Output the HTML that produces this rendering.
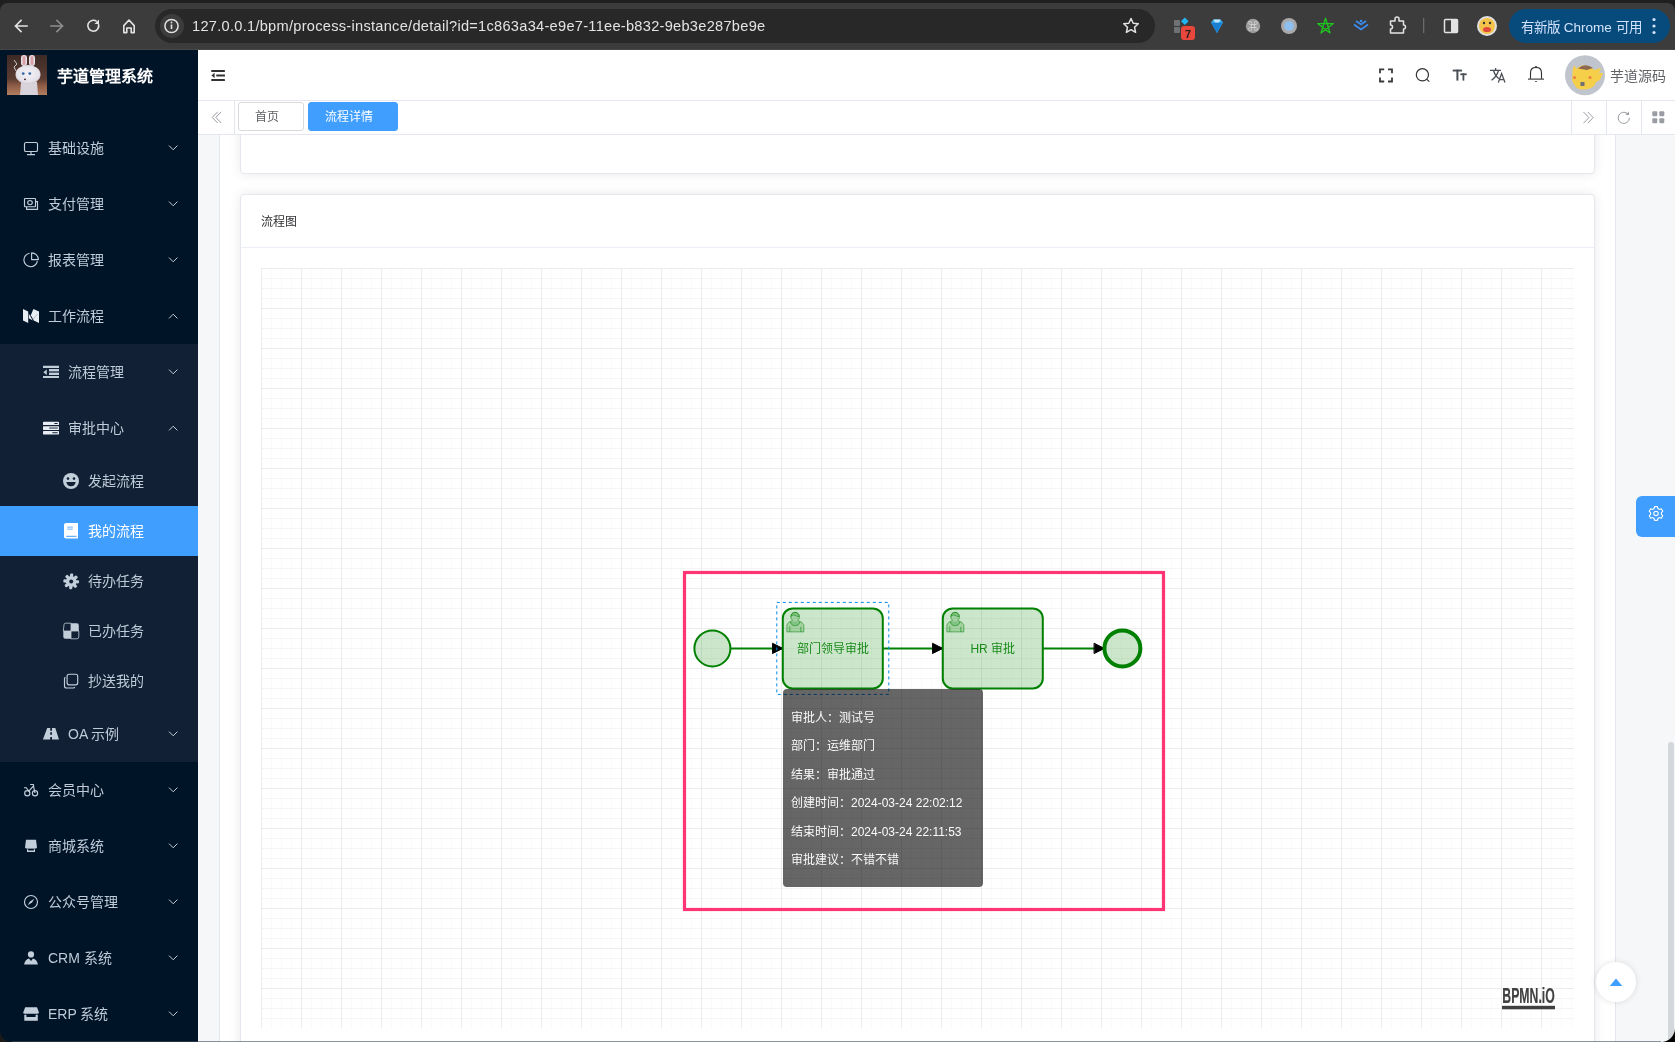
<!DOCTYPE html>
<html lang="zh-CN"><head><meta charset="utf-8">
<style>
*{box-sizing:border-box;margin:0;padding:0}
body{will-change:transform}
html,body{width:1675px;height:1042px;overflow:hidden;background:#f5f7f9;font-family:"Liberation Sans",sans-serif}
svg{position:absolute;overflow:visible}
/* chrome */
#chrome{position:absolute;left:0;top:0;width:1675px;height:50px;background:#1f1f1f}
#chrome .bar{position:absolute;left:0;top:3px;width:1675px;height:47px;background:#3c3c3c;border-radius:8px 8px 0 0}
#chrome .line{position:absolute;left:0;top:49px;width:1675px;height:1px;background:#474747}
#url{position:absolute;left:155px;top:9px;width:1000px;height:34px;border-radius:17px;background:#282828}
#url .info{position:absolute;left:5px;top:5px;width:24px;height:24px;border-radius:12px;background:#3c3c3c}
#url .txt{position:absolute;left:37px;top:8.6px;font-size:14.6px;color:#e3e3e3;white-space:nowrap;letter-spacing:.28px}
#newchrome{position:absolute;left:1509px;top:9px;width:161px;height:34px;border-radius:17px;background:#064b7b;color:#d3e3fd;font-size:13.5px}
#newchrome span{position:absolute;left:12px;top:6.8px;white-space:nowrap;font-weight:500}
/* sidebar */
#side{position:absolute;left:0;top:50px;width:198px;height:992px;background:#001428;overflow:hidden}
#side .logo{position:absolute;left:7px;top:5px;width:40px;height:40px;background:radial-gradient(ellipse 11px 13px at 22px 24px,#f2eef0 60%,transparent 100%),radial-gradient(ellipse 8px 5px at 22px 37px,#d9c8c2 50%,transparent 100%),linear-gradient(#4a2e25,#7a5040 60%,#b07a5c)}
#side .title{position:absolute;left:57px;top:16px;font-size:16px;font-weight:bold;color:#fff;white-space:nowrap;line-height:22px}
.mi{position:absolute;left:0;width:198px;color:#bfcbd9;font-size:14px;white-space:nowrap}
.mi .t{position:absolute;top:50%;margin-top:-10px;line-height:20px}
.mi svg{top:50%}
.ch{position:absolute;left:169px;top:50%;width:9px;height:6px;margin-top:-3px}
.sub{position:absolute;left:0;top:294px;width:198px;height:418px;background:#112034}
/* header */
#hdr{position:absolute;left:198px;top:50px;width:1477px;height:51px;background:#fff;border-bottom:1px solid #e4e7ed}
#tags{position:absolute;left:198px;top:101px;width:1477px;height:34px;background:#fff;border-bottom:1px solid #e4e7ed}
.tag{position:absolute;top:1px;height:29px;border:1px solid #d9d9d9;border-radius:3px;font-size:12px;color:#606266;line-height:29px;white-space:nowrap}
.tb{position:absolute;top:0;height:34px;border-left:1px solid #e4e7ed;width:35px}
/* main */
#wrap{position:absolute;left:219px;top:135px;width:1397px;height:907px;background:#fff;overflow:hidden;box-shadow:inset 1px 0 0 #e4e7ed,inset -1px 0 0 #e4e7ed}
.card{position:absolute;background:#fff;border:1px solid #e4e7ed;border-radius:4px;box-shadow:0 0 12px 0 rgba(0,0,0,.09)}
.chd{position:absolute;left:0;top:0;width:100%;height:53px;border-bottom:1px solid #ebeef5;font-size:12px;color:#303133;padding:19.3px 0 0 20px;line-height:17px}
#grid{position:absolute;left:20px;top:73px;width:1313px;height:760px;background-color:#fff;
background-image:linear-gradient(#ececec 1px,transparent 1px),linear-gradient(90deg,#ececec 1px,transparent 1px),linear-gradient(#f5f5f5 1px,transparent 1px),linear-gradient(90deg,#fafafa 1px,transparent 1px);
background-size:40px 40px,40px 40px,10px 10px,10px 10px}
#tip{position:absolute;left:783px;top:689px;width:200px;height:198px;background:rgba(0,0,0,.6);border-radius:4px;color:#fafafa;font-size:12px;padding:20.6px 0 0 8px}
#tip div{height:28.55px;line-height:16.33px;white-space:nowrap}
</style></head><body>
<div id="chrome">
  <div class="bar"></div>
  <div class="line"></div>
  <svg width="1675" height="50" style="left:0;top:0">
    <g stroke="#e3e3e3" stroke-width="1.6" fill="none" stroke-linecap="square">
      <path d="M15.5 26H27M21 20.5L15.5 26L21 31.5"/>
      <path d="M51 26H62.5M57 20.5L62.5 26L57 31.5" stroke="#8e8e8e"/>
      <path d="M98.5 24A5.5 5.5 0 1 1 96.8 21.5" stroke-linecap="butt"/>
      <path d="M123.8 25.6L129 20L134.2 25.6V32.6H131.2V28H126.8V32.6H123.8Z" stroke-linejoin="round"/>
    </g>
    <path d="M99 19.5V24H94.5Z" fill="#e3e3e3"/>
  </svg>
  <div id="url"><div class="info"></div><div class="txt">127.0.0.1/bpm/process-instance/detail?id=1c863a34-e9e7-11ee-b832-9eb3e287be9e</div></div>
  <svg width="1675" height="50" style="left:0;top:0">
    <circle cx="171.5" cy="26" r="6.6" stroke="#e3e3e3" stroke-width="1.5" fill="none"/>
    <rect x="170.7" y="24.5" width="1.6" height="4.5" fill="#e3e3e3"/><circle cx="171.5" cy="22.5" r="0.9" fill="#e3e3e3"/>
    <path d="M1131 18.5L1133.2 23.3L1138.3 23.8L1134.5 27.2L1135.6 32.3L1131 29.7L1126.4 32.3L1127.5 27.2L1123.7 23.8L1128.8 23.3Z" stroke="#e3e3e3" stroke-width="1.5" fill="none" stroke-linejoin="round"/>
    <rect x="1174" y="20" width="6" height="6" rx="1" fill="#6f7275"/><rect x="1174" y="27" width="6" height="6" rx="1" fill="#6f7275"/>
    <path d="M1184.8 17.6L1188.6 21.3L1184.8 25L1181 21.3Z" fill="#22b5f5"/>
    <rect x="1181" y="26" width="14" height="14" rx="3" fill="#e9473b"/>
    <text x="1188" y="37.5" font-size="11" font-weight="bold" text-anchor="middle" fill="#202020" font-family="Liberation Sans">7</text>
    <path d="M1211 22.5L1213.5 19.5H1220.5L1223 22.5L1217 33Z" fill="#3db4f2"/><path d="M1211 22.5H1223L1217 33Z" fill="#1a7fd0"/><path d="M1213.5 19.5H1220.5L1219 22.5H1215Z" fill="#bfe8ff"/>
    <circle cx="1253" cy="26" r="7.2" fill="#9d9d9d"/><text x="1253" y="30" font-size="10" text-anchor="middle" fill="#eee" font-family="Liberation Sans">⌘</text>
    <circle cx="1289" cy="26" r="8" fill="#a9a9a9"/><circle cx="1289" cy="26" r="4.8" fill="#8fbff0"/>
    <path d="M1325.5 18.2L1330 33L1317.6 23.6H1333.4L1321 33Z" stroke="#1fc41f" stroke-width="1.3" fill="none" stroke-linejoin="round"/>
    <g stroke="#3b8cf0" stroke-width="1.8" fill="none"><path d="M1354 24.5L1361 29.5L1368 24.5"/><path d="M1356 21L1361 24.5L1366 21"/></g><circle cx="1361" cy="21" r="1.3" fill="#3b8cf0"/>
    <path d="M1390.5 21H1395V19A2 2 0 0 1 1399 19V21H1403.5V25A2 2 0 0 1 1403.5 29V33H1390.5V29A2 2 0 0 0 1390.5 25Z" stroke="#e3e3e3" stroke-width="1.5" fill="none" stroke-linejoin="round"/>
    <rect x="1423" y="18" width="1.3" height="15" fill="#6b6b6b"/>
    <rect x="1444.5" y="19.5" width="13" height="13" stroke="#e3e3e3" stroke-width="1.5" fill="none" rx="1"/><rect x="1451" y="19.5" width="6.5" height="13" fill="#e3e3e3"/>
    <circle cx="1487" cy="26" r="10" fill="#e0e0e0"/><circle cx="1487" cy="26" r="8" fill="#f3c34a"/><ellipse cx="1487" cy="29.5" rx="4" ry="2.6" fill="#e04a3c"/><circle cx="1484" cy="23" r="1.2" fill="#333"/><circle cx="1490" cy="23" r="1.2" fill="#333"/>
  </svg>
  <div id="newchrome"><span>有新版 Chrome 可用</span>
    <svg width="10" height="20" style="left:141px;top:7px"><circle cx="4" cy="3.5" r="1.6" fill="#d3e3fd"/><circle cx="4" cy="10" r="1.6" fill="#d3e3fd"/><circle cx="4" cy="16.5" r="1.6" fill="#d3e3fd"/></svg>
  </div>
</div>

<div id="side">
  <svg width="40" height="40" style="left:7px;top:5px">
  <defs><linearGradient id="lg" x1="0" y1="0" x2="0" y2="1"><stop offset="0" stop-color="#3d2a26"/><stop offset=".6" stop-color="#5a3c32"/><stop offset=".75" stop-color="#8a5a44"/><stop offset="1" stop-color="#b37e60"/></linearGradient>
  <radialGradient id="rg" cx=".5" cy=".45" r=".55"><stop offset="0" stop-color="#f4f2f6"/><stop offset=".8" stop-color="#e6e2ea"/><stop offset="1" stop-color="#cfc8d0"/></radialGradient></defs>
  <rect width="40" height="40" fill="url(#lg)"/>
  <rect x="14" y="0" width="6" height="11" rx="3" fill="#e8e4ea"/><rect x="15.5" y="1" width="3" height="9" rx="1.5" fill="#d9a0ac"/>
  <rect x="22" y="0" width="6" height="11" rx="3" fill="#e8e4ea"/><rect x="23.5" y="1" width="3" height="9" rx="1.5" fill="#d9a0ac"/>
  <path d="M14 27H30L31 40H13Z" fill="#d8d2da"/>
  <ellipse cx="21" cy="19.5" rx="12.5" ry="9.5" fill="url(#rg)"/>
  <circle cx="16.2" cy="18.6" r="1.4" fill="#3a6aa8"/><circle cx="22.8" cy="18.6" r="1.4" fill="#3a6aa8"/>
  <ellipse cx="18" cy="24.4" rx="1" ry="0.8" fill="#4a2a2a"/>
  <path d="M7 5L10 9L7 12L9 16" stroke="#c8c8c8" stroke-width="1" fill="none"/>
</svg>
  <div class="title">芋道管理系统</div>
  <div class="sub"></div>
  <div class="mi" style="top:70px;height:56px"><span class="t" style="left:48px">基础设施</span></div>
  <div class="mi" style="top:126px;height:56px"><span class="t" style="left:48px">支付管理</span></div>
  <div class="mi" style="top:182px;height:56px"><span class="t" style="left:48px">报表管理</span></div>
  <div class="mi" style="top:238px;height:56px"><span class="t" style="left:48px">工作流程</span></div>
  <div class="mi" style="top:294px;height:56px"><span class="t" style="left:68px">流程管理</span></div>
  <div class="mi" style="top:350px;height:56px"><span class="t" style="left:68px">审批中心</span></div>
  <div class="mi" style="top:406px;height:50px"><span class="t" style="left:88px">发起流程</span></div>
  <div class="mi" style="top:456px;height:50px;background:#409eff;color:#fff"><span class="t" style="left:88px">我的流程</span></div>
  <div class="mi" style="top:506px;height:50px"><span class="t" style="left:88px">待办任务</span></div>
  <div class="mi" style="top:556px;height:50px"><span class="t" style="left:88px">已办任务</span></div>
  <div class="mi" style="top:606px;height:50px"><span class="t" style="left:88px">抄送我的</span></div>
  <div class="mi" style="top:656px;height:56px"><span class="t" style="left:68px">OA 示例</span></div>
  <div class="mi" style="top:712px;height:56px"><span class="t" style="left:48px">会员中心</span></div>
  <div class="mi" style="top:768px;height:56px"><span class="t" style="left:48px">商城系统</span></div>
  <div class="mi" style="top:824px;height:56px"><span class="t" style="left:48px">公众号管理</span></div>
  <div class="mi" style="top:880px;height:56px"><span class="t" style="left:48px">CRM 系统</span></div>
  <div class="mi" style="top:936px;height:56px"><span class="t" style="left:48px">ERP 系统</span></div>
  <svg width="198" height="992" style="left:0;top:0">
<g transform="translate(0,-50)">
<path d="M169 145.6L173.2 149.8L177.4 145.6" stroke="#c3cedb" stroke-width="1" fill="none"/><path d="M169 201.6L173.2 205.8L177.4 201.6" stroke="#c3cedb" stroke-width="1" fill="none"/><path d="M169 257.6L173.2 261.8L177.4 257.6" stroke="#c3cedb" stroke-width="1" fill="none"/><path d="M169 318.4L173.2 314.2L177.4 318.4" stroke="#c3cedb" stroke-width="1" fill="none"/><path d="M169 369.6L173.2 373.8L177.4 369.6" stroke="#c3cedb" stroke-width="1" fill="none"/><path d="M169 430.4L173.2 426.2L177.4 430.4" stroke="#c3cedb" stroke-width="1" fill="none"/><path d="M169 731.6L173.2 735.8L177.4 731.6" stroke="#c3cedb" stroke-width="1" fill="none"/><path d="M169 787.6L173.2 791.8L177.4 787.6" stroke="#c3cedb" stroke-width="1" fill="none"/><path d="M169 843.6L173.2 847.8L177.4 843.6" stroke="#c3cedb" stroke-width="1" fill="none"/><path d="M169 899.6L173.2 903.8L177.4 899.6" stroke="#c3cedb" stroke-width="1" fill="none"/><path d="M169 955.6L173.2 959.8L177.4 955.6" stroke="#c3cedb" stroke-width="1" fill="none"/><path d="M169 1011.6L173.2 1015.8L177.4 1011.6" stroke="#c3cedb" stroke-width="1" fill="none"/>
<g stroke="#c3cedb" stroke-width="1.15" fill="none">
 <rect x="24.5" y="142.5" width="13" height="9" rx="1.6"/>
 <path d="M31 151.5V154.5M27 154.6H35"/>
 <rect x="24.5" y="198.5" width="11" height="8.2" rx="0.6"/>
 <path d="M36 201.6H37.5V209.4H26.6V207"/>
 <ellipse cx="30" cy="202.6" rx="2.3" ry="2.1"/>
 <path d="M29.6 253.2A6.8 6.8 0 1 0 37.4 261.2"/>
 <path d="M31.6 252.8V259.6H38.4A6.8 6.8 0 0 0 31.6 252.8Z" stroke-linejoin="round"/>
 <rect x="67.1" y="674.2" width="10.6" height="10.6" rx="2"/>
 <path d="M65.4 677.3A1.8 1.8 0 0 0 64.5 678.8V686A2 2 0 0 0 66.5 688H73.4A1.8 1.8 0 0 0 74.9 687.1"/>
 <circle cx="31" cy="793" r="0" />
 <circle cx="27.3" cy="793.2" r="2.6"/><circle cx="35" cy="793.2" r="2.6"/>
 <path d="M24 787.7H26.3L28.6 791M30.2 784.5H33.3Q33.8 785 33.5 786L28.4 791.6M33.5 786L35 793"/>
 <circle cx="31" cy="902" r="6.5"/>
</g>
<g fill="#c3cedb">
 <path d="M27.7 905.3L29.9 901.4L34.3 898.7L32.1 902.6Z"/>
 <circle cx="31" cy="954.4" r="3.1"/>
 <path d="M24.1 964.6Q25 959.5 29 958.6L31 961L33 958.6Q37 959.5 37.9 964.6Z"/>
 <path d="M25.2 1007.2H37L39 1012.6Q38.6 1014 37.3 1013.6Q36.2 1014.4 35.3 1013.6Q34.1 1014.4 33.1 1013.6Q32 1014.4 31 1013.6Q30 1014.4 29 1013.6Q27.9 1014.4 26.8 1013.6Q25.6 1014.4 24.6 1013.6Q23.2 1014 23.2 1012.6Z"/>
 <path d="M24.3 1014.8H26.4V1017.1H35.6V1014.8H37.8V1020.8H24.3Z"/>
 <path d="M26 839.8H36L37 847.6Q36.3 849.2 35.1 848.2Q34 849.3 33 848.2Q32 849.3 31 848.2Q30 849.3 29 848.2Q28 849.3 26.9 848.2Q25.8 849.2 25 847.6Z"/>
 <path d="M27 849.2H28.2V850.6H33.8V849.2H35V852H27Z"/>
 <path fill-rule="evenodd" d="M42.9 739.6L47.2 728H50.2V730.8H52V728H55.3L59 739.6H52V737H50.2V739.6ZM50.2 732.2V734.8H52V732.2Z"/>
 <path d="M43 365.8H59V368H43ZM49 369.1H59V370.9H49ZM49 372.9H59V374.9H49ZM43 376H59V378.1H43ZM43.3 372.2L46.8 369.4V375Z"/>
 <rect x="49" y="371" width="10" height="1.9" fill="#5a6778"/>
 <circle cx="71" cy="481" r="8"/>
 <path d="M63.3 631H71V638.8H65.3A2 2 0 0 1 63.3 636.8ZM71 623.2H76.8A2 2 0 0 1 78.8 625.2V631H71Z"/>
 <circle cx="71.2" cy="581.4" r="5.3"/><rect x="69.60" y="573.50" width="3.2" height="4" rx="1.2" transform="rotate(4 71.2 581.4)"/><rect x="69.60" y="573.50" width="3.2" height="4" rx="1.2" transform="rotate(49 71.2 581.4)"/><rect x="69.60" y="573.50" width="3.2" height="4" rx="1.2" transform="rotate(94 71.2 581.4)"/><rect x="69.60" y="573.50" width="3.2" height="4" rx="1.2" transform="rotate(139 71.2 581.4)"/><rect x="69.60" y="573.50" width="3.2" height="4" rx="1.2" transform="rotate(184 71.2 581.4)"/><rect x="69.60" y="573.50" width="3.2" height="4" rx="1.2" transform="rotate(229 71.2 581.4)"/><rect x="69.60" y="573.50" width="3.2" height="4" rx="1.2" transform="rotate(274 71.2 581.4)"/><rect x="69.60" y="573.50" width="3.2" height="4" rx="1.2" transform="rotate(319 71.2 581.4)"/>
</g>
<circle cx="71.2" cy="581.4" r="2" fill="#112034"/>
<path d="M64 624.8A1.6 1.6 0 0 1 65.6 623.2H71V631H63.3Z M71 631H78.8V636.8A2 2 0 0 1 76.8 638.8H71Z" stroke="#c3cedb" stroke-width="0.8" fill="none"/>
<g fill="#112034"><circle cx="68" cy="478.6" r="1.3"/><circle cx="74" cy="478.6" r="1.3"/><path d="M66.3 482H75.7Q75 486.2 71 486.2Q67 486.2 66.3 482Z"/></g>
<g fill="#e9eef4">
 <path d="M23 309L28.2 311.6V323L23 320.4Z"/>
 <path d="M28.8 313.8L32.8 320.4L28.8 318.3Z"/><path d="M33.4 309.1L39 311.6V323L33.8 320.6L30.8 315.2Z"/><path d="M37.6 314L32.6 319.8" stroke="#001428" stroke-width="0.6" stroke-dasharray="0.8,0.6" opacity=".6"/>
 <rect x="43" y="421.7" width="16" height="3.4" rx="0.6"/>
 <rect x="43" y="426.2" width="16" height="3.7" rx="0.6"/>
 <rect x="43" y="431.1" width="16" height="3.3" rx="0.6"/>
</g>
<rect x="54.2" y="423" width="3.6" height="0.9" rx="0.4" fill="#112034"/>
<rect x="49.2" y="427.2" width="8.6" height="1.7" fill="#6e7a88"/>
<rect x="52.2" y="432.3" width="5.6" height="0.9" rx="0.4" fill="#112034"/>
<g>
 <path d="M66 523H78V538.6H66A2 2 0 0 1 64 536.6V525A2 2 0 0 1 66 523Z" fill="#fff"/>
 <rect x="67.2" y="526.7" width="5.6" height="0.8" fill="#409eff"/><rect x="67.2" y="528.7" width="5.6" height="0.8" fill="#409eff"/>
 <path d="M66.2 535.8H76.5V536.8H66.2Z" fill="#409eff"/>
</g>
</g></svg>
</div>

<div id="hdr">
  <svg width="1477" height="50" style="left:0;top:0"><g transform="translate(-198,-50)">
<g fill="#333">
 <rect x="211.2" y="70" width="13.8" height="2" rx=".4"/><rect x="216.2" y="74.4" width="8.8" height="2" rx=".4"/><rect x="211.2" y="79" width="13.8" height="2" rx=".4"/>
 <path d="M211.4 75.4L214.6 72.8V78Z"/>
</g>
<g stroke="#3a3a3a" stroke-width="1.8" fill="none">
 <path d="M1380 73.2V69.3H1384.2M1388 69.3H1392V73.2M1392 77.6V81.5H1388M1384.2 81.5H1380V77.6"/>
</g>
<circle cx="1422.4" cy="74.8" r="6.1" stroke="#303133" stroke-width="1.2" fill="none"/>
<path d="M1426.9 79.3L1429.3 81.7" stroke="#303133" stroke-width="1.2"/>
<g fill="#4a4e55">
 <rect x="1452.7" y="69.6" width="9.3" height="1.9"/><rect x="1456.4" y="69.6" width="2" height="11"/>
 <rect x="1460.3" y="73.4" width="6.4" height="1.8"/><rect x="1462.5" y="73.4" width="1.8" height="7.2"/>
</g>
<g stroke="#4a4e55" stroke-width="1.3" fill="none">
 <path d="M1490 70.3H1501M1495.6 68V70.3M1493.5 70.5Q1495.5 77 1499.8 79M1498.6 70.3Q1496.5 77 1491.5 80.2"/>
 <path d="M1498.3 82.6L1501.6 73.6L1505 82.6M1499.4 79.6H1503.8"/>
</g>
<g stroke="#303133" stroke-width="1.1" fill="none">
 <path d="M1530.5 78.8V73Q1530.5 67.4 1536 67.4Q1541.5 67.4 1541.5 73V78.8"/>
 <path d="M1528 79.1H1544"/>
</g>
<circle cx="1536" cy="67" r="0.9" fill="#303133"/><rect x="1535.2" y="81" width="1.6" height="0.9" fill="#303133"/>
<circle cx="1585" cy="75.2" r="20" fill="#c0c4cc"/>
<path d="M1574 65L1576.5 69Q1580 64 1588 66Q1592 67 1594 70L1601 68L1599 73L1603 73L1600 80L1596 82Q1594 89 1585 89.5Q1576 90 1574 84Q1571 80 1572.5 75Q1572 70 1574 65Z" fill="#f6cf4a"/>
<path d="M1578 68.5Q1585 62.5 1593 68L1587 70Z" fill="#8d6a4d"/>
<circle cx="1574.5" cy="77.5" r="1.6" fill="#f08040"/><circle cx="1590" cy="77.5" r="1.6" fill="#f08040"/>
<rect x="1580.5" y="82" width="4" height="4" fill="#707070"/>
</g></svg>
<div style="position:absolute;left:1412px;top:16px;font-size:14px;color:#606266;white-space:nowrap;line-height:20px">芋道源码</div>
</div>
<div id="tags">
  <div class="tb" style="left:0;border-left:0;border-right:1px solid #e4e7ed;width:37px"></div>
  <div class="tag" style="left:40px;width:66px;padding-left:15.5px">首页</div>
  <div class="tag" style="left:110px;width:90px;padding-left:15.5px;background:#409eff;border-color:#409eff;color:#fff">流程详情</div>
  <div class="tb" style="left:1373px"></div>
  <div class="tb" style="left:1408px"></div>
  <div class="tb" style="left:1443px"></div>
  <svg width="1477" height="34" style="left:0;top:0"><g transform="translate(-198,-101)">
<g stroke="#9a9ca3" stroke-width="1" fill="none">
 <path d="M217.6 111.8L212.2 117.4L217.6 123M221.2 111.8L215.8 117.4L221.2 123"/>
 <path d="M1583.5 112L1588.9 117.6L1583.5 123.2M1587.8 112L1593.2 117.6L1587.8 123.2"/>
 <path d="M1629.4 117.8A5.6 5.6 0 1 1 1627.2 113.4"/>
</g>
<path d="M1629 111.4V115H1625.4Z" fill="#9a9ca3"/>
<g fill="#9a9da4">
 <rect x="1652.3" y="111.3" width="5" height="5" rx="1"/><rect x="1659.3" y="111.3" width="5" height="5" rx="1"/>
 <rect x="1652.3" y="118.3" width="5" height="5" rx="1"/><rect x="1659.3" y="118.3" width="5" height="5" rx="1"/>
</g>
</g></svg>
</div>
<div id="wrap">
  <div class="card" style="left:21px;top:-40px;width:1355px;height:78.5px"></div>
  <div class="card" style="left:21px;top:59px;width:1355px;height:960px">
    <div class="chd">流程图</div>
    <div id="grid"></div>
  </div>
</div>
<svg width="1675" height="1042" style="left:0;top:0">
  <defs>
    <marker id="arr" viewBox="0 0 20 20" refX="11" refY="10" markerWidth="10" markerHeight="10" orient="auto">
      <path d="M1 5L11 10L1 15Z" fill="#000" stroke="#000" stroke-width="1" stroke-linecap="round"/>
    </marker>
  </defs>
  <rect x="684.5" y="572.5" width="479" height="337" fill="none" stroke="#ff3474" stroke-width="3.2"/>
  <g stroke="green" stroke-width="2" fill="none">
    <path d="M730.4 648.4H782.8" marker-end="url(#arr)"/>
    <path d="M882.8 648.4H942.8" marker-end="url(#arr)"/>
    <path d="M1042.8 648.4H1104.4" marker-end="url(#arr)"/>
  </g>
  <g stroke="green" fill="green" fill-opacity="0.2">
    <circle cx="712.4" cy="648.4" r="18" stroke-width="2"/>
    <rect x="782.8" y="608.4" width="100" height="80" rx="10" stroke-width="2"/>
    <rect x="942.8" y="608.4" width="100" height="80" rx="10" stroke-width="2"/>
    <circle cx="1122.4" cy="648.4" r="18" stroke-width="4"/>
  </g>
  <g stroke="green" fill="green" fill-opacity="0.2" stroke-width="0.5" id="user1">
    <path d="m 797.8,620.4 c 0.909,-0.845 1.594,-2.049 1.594,-3.385 0,-2.554 -1.805,-4.622 -4.357,-4.622 -2.552,0 -4.288,2.068 -4.288,4.622 0,1.348 0.974,2.562 1.896,3.405 -0.529,0.187 -5.669,2.097 -5.794,4.756 v 6.718 h 17 v -6.718 c 0,-2.298 -5.528,-4.595 -6.051,-4.776 z m -8,6 l 0,5.5 m 11,0 l 0,-5"/>
    <path d="m 797.8,620.4 m 2.162,1.009 c 0,2.447 -2.158,4.431 -4.821,4.431 -2.665,0 -4.822,-1.981 -4.822,-4.431"/>
    <path d="m 797.8,620.4 m -6.9,-3.80 c 0,0 2.251,-2.358 4.274,-1.177 2.024,1.181 4.221,1.537 4.124,0.965 -0.098,-0.57 -0.117,-3.791 -4.191,-4.136 -3.575,0.001 -4.208,3.367 -4.207,4.348 z"/>
  </g>
  <use href="#user1" x="160" y="0"/>
  <g fill="green" fill-opacity=".88" font-size="12" font-family="Liberation Sans" text-anchor="middle">
    <text x="832.8" y="652.5">部门领导审批</text>
    <text x="992.8" y="652.5">HR 审批</text>
  </g>
  <rect x="776.8" y="602.4" width="112" height="92" fill="none" stroke="#008ae6" stroke-width="1" stroke-dasharray="3,3"/>
</svg>
<div id="tip">
  <div>审批人：测试号</div>
  <div>部门：运维部门</div>
  <div>结果：审批通过</div>
  <div>创建时间：2024-03-24 22:02:12</div>
  <div>结束时间：2024-03-24 22:11:53</div>
  <div>审批建议：不错不错</div>
</div>

<svg width="1675" height="1042" style="left:0;top:0">
  <text x="1502.3" y="1003.3" font-family="Liberation Sans" font-weight="bold" font-size="21.5" fill="#404040" stroke="#404040" stroke-width=".15" textLength="52.5" lengthAdjust="spacingAndGlyphs">BPMN.iO</text>
  <rect x="1502" y="1005.8" width="53" height="3.5" fill="#404040"/>
  <rect x="1668" y="742" width="6" height="300" rx="3" fill="#d4d7db"/>
</svg>
<div style="position:absolute;left:1596px;top:962px;width:40px;height:40px;border-radius:20px;background:#fff;box-shadow:0 0 6px rgba(0,0,0,.12)"></div>
<svg width="1675" height="1042" style="left:0;top:0">
  <path d="M1609.8 986L1616 978.6L1622.3 986Z" fill="#409eff"/>
</svg>
<div style="position:absolute;left:1636px;top:496px;width:45px;height:41px;border-radius:6px;background:#409eff"></div>
<svg width="1675" height="1042" style="left:0;top:0">
  <path d="M1654.6 506.6h2.8l.5 1.9 1.6.9 1.9-.6 1.4 2.4-1.4 1.4v1.8l1.4 1.4-1.4 2.4-1.9-.6-1.6.9-.5 1.9h-2.8l-.5-1.9-1.6-.9-1.9.6-1.4-2.4 1.4-1.4v-1.8l-1.4-1.4 1.4-2.4 1.9.6 1.6-.9z" stroke="#fff" stroke-width="1.1" fill="none" stroke-linejoin="round"/>
  <circle cx="1656" cy="513.4" r="2.2" stroke="#fff" stroke-width="1.1" fill="none"/>
</svg>
<svg width="1675" height="1042" style="left:0;top:0">
  <path d="M0 1030V1042H12A12 12 0 0 1 0 1030Z" fill="#1a1a1a"/>
  <path d="M1675 1028V1042H1661A14 14 0 0 0 1675 1028Z" fill="#000"/>
  <rect x="12" y="1041" width="1649" height="1" fill="#3d4b5a" opacity=".6"/>
</svg>
</body></html>
